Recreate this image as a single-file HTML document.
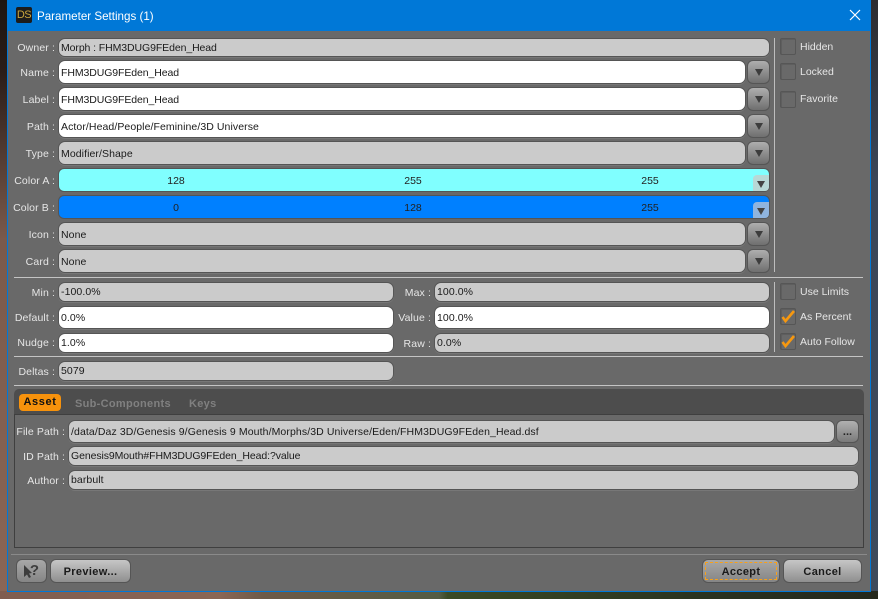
<!DOCTYPE html>
<html><head><meta charset="utf-8">
<style>
html,body{margin:0;padding:0;width:878px;height:599px;overflow:hidden;background:#3a4452;}
*{box-sizing:border-box;}
body{font-family:"Liberation Sans",Arial,sans-serif;font-size:10.5px;position:relative;}
.a{position:absolute;}
.bgl{left:0;top:0;width:8px;height:599px;background:linear-gradient(#1d1511 0,#2a1d18 12%,#7a5a4c 40%,#8a6656 100%);}
.bgr{left:870px;top:0;width:8px;height:599px;background:linear-gradient(#2c2c30 0,#3a4658 30%,#3d4a5c 100%);}
.bgb{left:0;top:591px;width:878px;height:8px;background:linear-gradient(90deg,#7f5d50 0,#8a6655 25%,#6d5a48 30%,#545c44 50%,#3a4a24 51%,#2a3320 80%,#24281c 100%);}
.dlg{left:7px;top:0;width:864px;height:592px;background:#696969;border:1px solid #0078d7;}
.tb{left:8px;top:1px;width:862px;height:30px;background:#0078d7;}
.tt{left:37px;top:9px;color:#fff;font-size:11.6px;line-height:15px;}
.f{position:absolute;border-radius:7px;background:#cbcbcb;border:1px solid #555;color:#1a1a1a;line-height:15px;padding:3px 0 0 2px;white-space:nowrap;box-shadow:0 1px 0 #777;letter-spacing:.08px;}
.w{background:#fff;}
.n{letter-spacing:-.09px;}
.l{position:absolute;color:#e6e6e6;text-align:right;white-space:nowrap;line-height:14px;margin-top:1px;letter-spacing:.12px;}
.dd{position:absolute;width:23px;height:24px;border-radius:6px;border:1px solid #555;background:linear-gradient(#aeaeae,#6f6f6f);}
.dd:after{content:"";position:absolute;left:7px;top:8px;border-left:4px solid transparent;border-right:4px solid transparent;border-top:7px solid #3d3d3d;}
.tri{position:absolute;width:16px;height:16px;border-radius:4px 0 4px 0;}
.tri:after{content:"";position:absolute;left:4px;top:6px;border-left:4px solid transparent;border-right:4px solid transparent;border-top:7px solid #444;}
.sv{position:absolute;left:774px;width:1px;background:#bdbdbd;}
.sh{position:absolute;height:1px;left:14px;width:849px;background:#c4c4c4;}
.cb{position:absolute;left:780px;width:16px;height:17px;background:#696969;border:1px solid #565656;box-shadow:inset 1px 1px 0 #5e5e5e;border-radius:2px;}
.cb svg{position:absolute;left:-1px;top:-1px;}
.cl{position:absolute;left:800px;color:#e6e6e6;line-height:14px;margin-top:1px;}
.btn{position:absolute;top:559px;height:24px;border-radius:6px;border:1px solid #555;background:linear-gradient(#c6c6c6,#8f8f8f);color:#1a1a1a;font-size:11px;font-weight:bold;text-align:center;line-height:24px;letter-spacing:.35px;}
.c{position:absolute;color:#222;text-align:center;width:40px;line-height:14px;margin-top:1px;}
</style></head><body>
<div class="a bgl"></div><div class="a bgr"></div><div class="a bgb"></div>
<div class="a dlg"></div>
<div class="a tb"></div>
<div class="a" style="left:16px;top:7px;width:16px;height:16px;background:#1c1c1c;border-radius:2px;color:#c9a53c;font-size:11px;line-height:16px;text-align:center;letter-spacing:-.5px;">DS</div>
<div class="a tt">Parameter Settings (1)</div>
<svg class="a" style="left:849px;top:9px" width="12" height="12" viewBox="0 0 12 12"><path d="M1 1L11 11M11 1L1 11" stroke="#fff" stroke-width="1.2" fill="none"/></svg>

<div class="l" style="left:10px;width:45px;top:40px">Owner :</div>
<div class="f n" style="left:58px;top:38px;width:712px;height:19px;padding-top:2px">Morph : FHM3DUG9FEden_Head</div>
<div class="l" style="left:10px;width:45px;top:65px">Name :</div>
<div class="f w n" style="left:58px;top:60px;width:688px;height:24px;padding-top:5px">FHM3DUG9FEden_Head</div><div class="dd" style="left:747px;top:60px"></div>
<div class="l" style="left:10px;width:45px;top:92px">Label :</div>
<div class="f w n" style="left:58px;top:87px;width:688px;height:24px;padding-top:5px">FHM3DUG9FEden_Head</div><div class="dd" style="left:747px;top:87px"></div>
<div class="l" style="left:10px;width:45px;top:119px">Path :</div>
<div class="f w" style="left:58px;top:114px;width:688px;height:24px;padding-top:5px">Actor/Head/People/Feminine/3D Universe</div><div class="dd" style="left:747px;top:114px"></div>
<div class="l" style="left:10px;width:45px;top:146px">Type :</div>
<div class="f" style="left:58px;top:141px;width:688px;height:24px;padding-top:5px">Modifier/Shape</div><div class="dd" style="left:747px;top:141px"></div>

<div class="l" style="left:10px;width:45px;top:173px">Color A :</div>
<div class="a" style="left:58px;top:168px;width:712px;height:24px;border-radius:6px;background:#80ffff;border:1px solid #555;"></div>
<div class="tri" style="left:753px;top:175px;background:#b8d8d6"></div>
<div class="c" style="left:156px;top:173px">128</div><div class="c" style="left:393px;top:173px">255</div><div class="c" style="left:630px;top:173px">255</div>
<div class="l" style="left:10px;width:45px;top:200px">Color B :</div>
<div class="a" style="left:58px;top:195px;width:712px;height:24px;border-radius:6px;background:#0080ff;border:1px solid #555;"></div>
<div class="tri" style="left:753px;top:202px;background:#8fb4de"></div>
<div class="c" style="left:156px;top:200px">0</div><div class="c" style="left:393px;top:200px">128</div><div class="c" style="left:630px;top:200px">255</div>

<div class="l" style="left:10px;width:45px;top:227px">Icon :</div>
<div class="f" style="left:58px;top:222px;width:688px;height:24px;padding-top:5px">None</div><div class="dd" style="left:747px;top:222px"></div>
<div class="l" style="left:10px;width:45px;top:254px">Card :</div>
<div class="f" style="left:58px;top:249px;width:688px;height:24px;padding-top:5px">None</div><div class="dd" style="left:747px;top:249px"></div>

<div class="sv" style="top:38px;height:234px"></div>
<div class="cb" style="top:38px"></div><div class="cl" style="top:39px">Hidden</div>
<div class="cb" style="top:63px"></div><div class="cl" style="top:64px">Locked</div>
<div class="cb" style="top:91px"></div><div class="cl" style="top:91px">Favorite</div>

<div class="sh" style="top:277px"></div>

<div class="l" style="left:10px;width:45px;top:285px">Min :</div>
<div class="f" style="left:58px;top:282px;width:336px;height:20px;padding-top:2px">-100.0%</div>
<div class="l" style="left:390px;width:41px;top:285px">Max :</div>
<div class="f" style="left:434px;top:282px;width:336px;height:20px;padding-top:2px">100.0%</div>
<div class="l" style="left:10px;width:45px;top:310px">Default :</div>
<div class="f w" style="left:58px;top:306px;width:336px;height:23px;padding-top:4px">0.0%</div>
<div class="l" style="left:390px;width:41px;top:310px">Value :</div>
<div class="f w" style="left:434px;top:306px;width:336px;height:23px;padding-top:4px">100.0%</div>
<div class="l" style="left:10px;width:45px;top:335px">Nudge :</div>
<div class="f w" style="left:58px;top:333px;width:336px;height:20px;padding-top:2px">1.0%</div>
<div class="l" style="left:390px;width:41px;top:336px">Raw :</div>
<div class="f" style="left:434px;top:333px;width:336px;height:20px;padding-top:2px">0.0%</div>

<div class="sv" style="top:282px;height:70px"></div>
<div class="cb" style="top:283px"></div><div class="cl" style="top:284px">Use Limits</div>
<div class="cb" style="top:308px"><svg width="16" height="17" viewBox="0 0 16 17"><path d="M2.5 9L5.5 13L14 3" stroke="#f7980f" stroke-width="2.6" fill="none"/></svg></div><div class="cl" style="top:309px">As Percent</div>
<div class="cb" style="top:333px"><svg width="16" height="17" viewBox="0 0 16 17"><path d="M2.5 9L5.5 13L14 3" stroke="#f7980f" stroke-width="2.6" fill="none"/></svg></div><div class="cl" style="top:334px">Auto Follow</div>

<div class="sh" style="top:356px"></div>
<div class="l" style="left:10px;width:45px;top:364px">Deltas :</div>
<div class="f" style="left:58px;top:361px;width:336px;height:20px;padding-top:2px">5079</div>
<div class="sh" style="top:385px"></div>

<div class="a" style="left:14px;top:389px;width:850px;height:26px;background:#4d4d4d;border-radius:5px 5px 0 0;"></div>
<div class="a" style="left:14px;top:414px;width:850px;height:134px;background:#696969;border:1px solid #3f3f3f;"></div>
<div class="a" style="left:19px;top:394px;width:42px;height:17px;border-radius:4px;background:#f7920c;color:#111;font-size:11px;font-weight:bold;text-align:center;line-height:17px;letter-spacing:.6px;">Asset</div>
<div class="a" style="left:75px;top:397px;color:#808080;font-size:11px;font-weight:bold;line-height:14px;letter-spacing:.3px;">Sub-Components</div>
<div class="a" style="left:189px;top:397px;color:#808080;font-size:11px;font-weight:bold;line-height:14px;letter-spacing:.3px;">Keys</div>

<div class="l" style="left:10px;width:55px;top:424px">File Path :</div>
<div class="f" style="left:68px;top:420px;width:767px;height:23px;padding-top:4px;letter-spacing:.1px">/data/Daz 3D/Genesis 9/Genesis 9 Mouth/Morphs/3D Universe/Eden/FHM3DUG9FEden_Head.dsf</div>
<div class="a" style="left:836px;top:420px;width:23px;height:23px;border-radius:6px;border:1px solid #555;background:linear-gradient(#b0b0b0,#7a7a7a);color:#222;font-size:11px;font-weight:bold;text-align:center;line-height:22px;">...</div>
<div class="l" style="left:10px;width:55px;top:449px">ID Path :</div>
<div class="f n" style="left:68px;top:446px;width:791px;height:20px;padding-top:2px">Genesis9Mouth#FHM3DUG9FEden_Head:?value</div>
<div class="l" style="left:10px;width:55px;top:473px">Author :</div>
<div class="f" style="left:68px;top:470px;width:791px;height:20px;padding-top:2px">barbult</div>

<div class="a" style="left:11px;top:554px;width:856px;height:1px;background:#8a8a8a;"></div>
<div class="btn" style="left:16px;width:31px;background:linear-gradient(#a8a8a8,#858585);color:#3d3d3d;font-size:15px;letter-spacing:0;text-align:right;padding-right:7px;line-height:22px;">?</div>
<svg class="a" style="left:23px;top:564px" width="10" height="15" viewBox="0 0 10 15"><path d="M1 1L1 13L4 10.5L6 14L8 13L6 9.5L9 9Z" fill="#3d3d3d"/></svg>
<div class="btn" style="left:50px;width:81px;">Preview...</div>
<div class="btn" style="left:702px;width:78px;background:linear-gradient(#a8a8a8,#858585);">Accept</div>
<div class="a" style="left:705px;top:562px;width:72px;height:18px;border:1px dashed #f7a11a;"></div>
<div class="btn" style="left:783px;width:79px;">Cancel</div>
</body></html>
